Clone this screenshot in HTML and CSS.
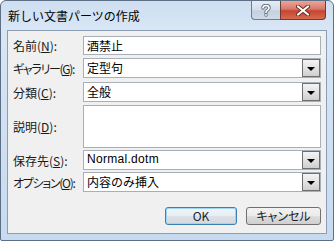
FILE: index.html
```html
<!DOCTYPE html>
<html lang="ja">
<head>
    <meta charset="UTF-8">
    <title>新しい文書パーツの作成</title>
    <link rel="stylesheet" href="styles.css">
</head>
<body>
    <div class="window">
        <div class="titlebar">
            <span class="title">新しい文書パーツの作成</span>
            <div class="caption-buttons">
                <div class="cap-btn help">
                    <svg width="12" height="13" viewBox="0 0 12 13">
                        <path d="M3 4 Q3 1.5 6 1.5 Q9 1.5 9 4 Q9 5.5 7 6.5 Q6 7 6 8.5" fill="none" stroke="#5e6b7a" stroke-width="3.4" stroke-linecap="round"/>
                        <circle cx="6" cy="11" r="1.7" fill="#5e6b7a"/>
                        <path d="M3 4 Q3 1.5 6 1.5 Q9 1.5 9 4 Q9 5.5 7 6.5 Q6 7 6 8.5" fill="none" stroke="#fff" stroke-width="1.6" stroke-linecap="round"/>
                        <circle cx="6" cy="11" r="0.9" fill="#fff"/>
                    </svg>
                </div>
                <div class="cap-btn close">
                    <svg width="14" height="11" viewBox="0 0 14 11">
                        <path d="M2 1.5 L12 9.5 M12 1.5 L2 9.5" stroke="#6b2a20" stroke-width="4" stroke-linecap="round"/>
                        <path d="M2 1.5 L12 9.5 M12 1.5 L2 9.5" stroke="#fff" stroke-width="2.2" stroke-linecap="round"/>
                    </svg>
                </div>
            </div>
        </div>
        <div class="content">
            <div class="row r-name">
                <label class="lbl">名前(<u>N</u>):</label>
                <div class="field">酒禁止</div>
            </div>
            <div class="row r-gallery">
                <label class="lbl narrow">ギャラリー(<u>G</u>):</label>
                <div class="field combo">定型句<span class="drop"></span></div>
            </div>
            <div class="row r-class">
                <label class="lbl">分類(<u>C</u>):</label>
                <div class="field combo">全般<span class="drop"></span></div>
            </div>
            <div class="row r-desc">
                <label class="lbl">説明(<u>D</u>):</label>
                <div class="field area"></div>
            </div>
            <div class="row r-save">
                <label class="lbl">保存先(<u>S</u>):</label>
                <div class="field combo latin">Normal.dotm<span class="drop"></span></div>
            </div>
            <div class="row r-option">
                <label class="lbl narrow">オプション(<u>O</u>):</label>
                <div class="field combo">内容のみ挿入<span class="drop"></span></div>
            </div>
            <div class="buttons">
                <button class="btn ok">OK</button>
                <button class="btn cancel">キャンセル</button>
            </div>
        </div>
    </div>
</body>
</html>
```

FILE: styles.css
```css
body {
    margin: 0;
    font-family: "Noto Sans CJK JP", "Liberation Sans", sans-serif;
    font-size: 12px;
    color: #000;
    background: #fff;
}
.window {
    width: 334px;
    height: 241px;
    box-sizing: border-box;
    border: 1px solid #5d6f85;
    border-radius: 6px 6px 2px 2px;
    background: linear-gradient(180deg, #cfdff1 0%, #d8e6f5 12%, #c7daef 100%);
    padding: 0 6px 6px 6px;
    display: flex;
    flex-direction: column;
}
.titlebar {
    height: 29px;
    display: flex;
    align-items: flex-start;
    justify-content: space-between;
}
.title {
    padding-left: 1px;
    line-height: 29px;
    font-size: 12px;
    color: #000;
}
.caption-buttons {
    display: flex;
    margin-right: 1px;
}
.cap-btn {
    height: 19px;
    box-sizing: border-box;
    display: flex;
    align-items: center;
    justify-content: center;
    border: 1px solid #6d7c8e;
    border-top: none;
}
.help {
    width: 29px;
    border-radius: 0 0 0 4px;
    border-right: none;
    background: linear-gradient(180deg, #e4ecf5 0%, #d2dde9 50%, #c2d0e0 55%, #cfdbe8 100%);
}
.close {
    width: 46px;
    border-radius: 0 0 4px 0;
    border-color: #6e3b31;
    background: linear-gradient(180deg, #e9a797 0%, #d8776a 45%, #c5452f 55%, #d66a50 100%);
}
.content {
    flex: 1;
    background: #f0f0f0;
    border: 1px solid #8b9db3;
    padding: 5px 5px 0 5px;
    display: flex;
    flex-direction: column;
}
.row {
    display: flex;
    align-items: center;
}
.lbl {
    width: 70px;
    flex-shrink: 0;
    font-feature-settings: "palt";
    white-space: nowrap;
    color: #1a1a1a;
}
.narrow {
    letter-spacing: -1.3px;
}
.lbl u {
    text-decoration-thickness: 1px;
    text-underline-offset: 1px;
}
.field {
    position: relative;
    flex: 1;
    box-sizing: border-box;
    background: #fff;
    border: 1px solid #a9afb8;
    padding-left: 3px;
    line-height: 17px;
}
.latin {
    font-family: "Liberation Sans", sans-serif;
    letter-spacing: 0.3px;
}
.r-name .field {
    height: 19px;
}
.combo {
    height: 20px;
}
.area {
    height: 43px;
}
.r-name {
    margin-bottom: 3px;
}
.r-gallery {
    margin-bottom: 4px;
}
.r-class {
    margin-bottom: 3px;
}
.r-desc {
    margin-bottom: 2px;
}
.r-save {
    margin-bottom: 2px;
}
.drop {
    position: absolute;
    top: 0;
    right: 0;
    width: 18px;
    height: 18px;
    box-sizing: border-box;
    border: 1px solid #6f6f6f;
    background: linear-gradient(180deg, #f4f4f4 0%, #e2e2e2 50%, #cfcfcf 100%);
}
.drop::after {
    content: "";
    position: absolute;
    left: 4px;
    top: 7px;
    border-left: 4px solid transparent;
    border-right: 4px solid transparent;
    border-top: 4px solid #000;
}
.buttons {
    display: flex;
    justify-content: flex-end;
    gap: 9px;
    margin-top: 15px;
}
.btn {
    height: 18px;
    box-sizing: border-box;
    padding: 0;
    font-family: "Noto Sans CJK JP", "Liberation Sans", sans-serif;
    font-size: 12px;
    line-height: 14px;
    color: #222;
    border: 1px solid #707070;
    border-radius: 3px;
    background: linear-gradient(180deg, #f2f2f2 0%, #ebebeb 48%, #dddddd 52%, #cfcfcf 100%);
    font-feature-settings: "palt";
}
.ok {
    width: 72px;
    border-color: #3c7fb1;
    box-shadow: inset 0 0 0 1px #9fd5f0;
    background: linear-gradient(180deg, #f1f5f8 0%, #e8edf1 48%, #dbe1e6 52%, #d2d9df 100%);
}
.cancel {
    width: 75px;
}
```
